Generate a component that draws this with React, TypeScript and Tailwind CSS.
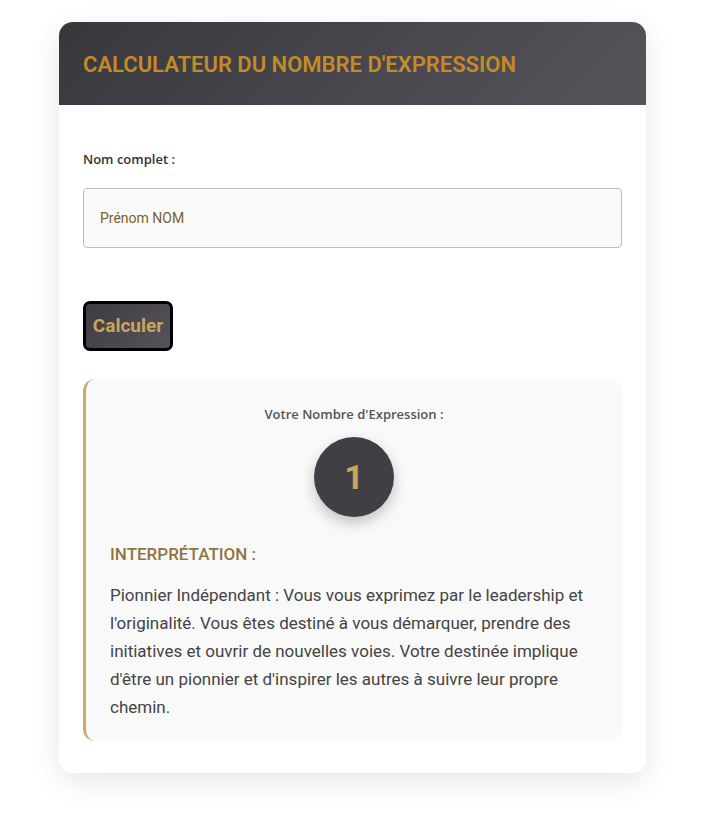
import React from "react";

export default function App() {
  return (
    <div className="min-h-[816px] w-full bg-white pt-[22px] pb-[40px]">
      <div className="ml-[59px] w-[587px] overflow-hidden rounded-[14px] bg-white shadow-[0_8px_28px_rgba(0,0,0,0.10)]">
        <div className="flex h-[83px] items-center bg-[linear-gradient(135deg,#38373c_0%,#4a4950_60%,#55545b_100%)] px-6">
          <h1 className="pt-[2px] font-['Roboto'] text-[22px] font-semibold tracking-[0px] text-[#c38b27]">
            CALCULATEUR DU NOMBRE D'EXPRESSION
          </h1>
        </div>
        <div className="px-6 pt-[45px] pb-[32px]">
          <label className="block font-['Open_Sans'] text-[13px] font-semibold leading-[18px] text-[#333]">
            Nom complet :
          </label>
          <div className="mt-[20px] flex h-[60px] w-[539px] items-center rounded-[4px] border border-[#bdbdbd] bg-[#fafafa] px-4">
            <span className="font-['Roboto'] text-[14px] text-[#7a5f2c]">Prénom NOM</span>
          </div>
          <button className="mt-[53px] flex h-[50px] w-[90px] items-center justify-center rounded-[7px] border-[3px] border-black bg-[linear-gradient(135deg,#3d3c42,#55545a)] font-['Roboto'] text-[19px] font-bold text-[#c9a45e]">
            Calculer
          </button>
          <div className="mt-[28px] w-[539px] rounded-[12px] border-l-[3px] border-[#c9ab6c] bg-[#f9f9f9] pt-[26px] pr-6 pb-[20px] pl-6">
            <p className="text-center font-['Open_Sans'] text-[13px] font-semibold leading-[18px] text-[#555]">
              Votre Nombre d'Expression :
            </p>
            <div className="mt-[14px] flex justify-center">
              <div className="flex h-[80px] w-[80px] items-center justify-center rounded-full bg-[#403f45] shadow-[0_6px_14px_rgba(0,0,0,0.22)]">
                <span className="font-['Roboto'] text-[34px] font-bold text-[#cba35c]">1</span>
              </div>
            </div>
            <h2 className="mt-[26px] font-['Roboto'] text-[17px] font-medium leading-[22px] text-[#8f7641]">
              INTERPRÉTATION :
            </h2>
            <p className="mt-[16px] font-['Roboto'] text-[17px] leading-[28px] text-[#444]">
              Pionnier Indépendant : Vous vous exprimez par le leadership et l'originalité. Vous êtes destiné à vous démarquer, prendre des initiatives et ouvrir de nouvelles voies. Votre destinée implique d'être un pionnier et d'inspirer les autres à suivre leur propre chemin.
            </p>
          </div>
        </div>
      </div>
    </div>
  );
}
